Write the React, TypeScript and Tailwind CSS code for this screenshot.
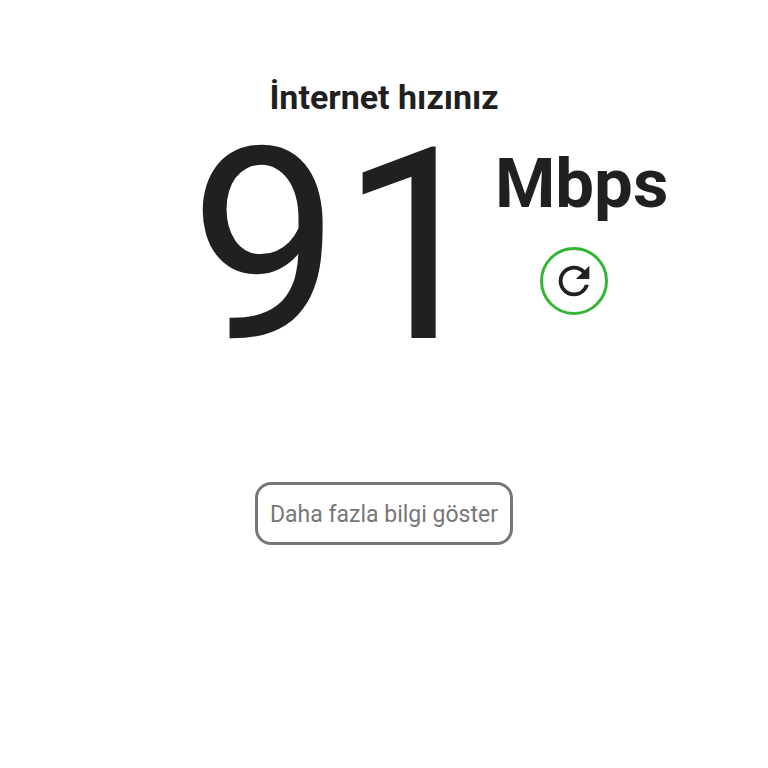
import { MdRefresh } from "react-icons/md";

export default function App() {
  return (
    <main className="flex min-h-screen flex-col items-center bg-white pt-[76px] font-['Roboto',sans-serif] text-[#221f1f]">
      <h1 className="text-[34px] leading-[42px] font-bold">İnternet hızınız</h1>

      {/* Speed */}
      <div className="flex w-full items-start justify-center pl-[90px]">
        <div className="text-[268px] leading-[256px]">91</div>
        <div className="ml-1 flex flex-col items-start pt-6">
          <span className="text-[69px] leading-[84px] font-bold">Mbps</span>
          <button
            type="button"
            aria-label="Yeniden başlat"
            className="mt-[21px] ml-[45px] flex size-[68px] items-center justify-center rounded-full border-3 border-[#35b535]"
          >
            <MdRefresh className="size-[46px]" />
          </button>
        </div>
      </div>

      <button
        type="button"
        className="mt-[108px] h-[63px] rounded-2xl border-3 border-[#777777] px-3 pt-1 text-[23px] text-[#777777]"
      >
        Daha fazla bilgi göster
      </button>
    </main>
  );
}
